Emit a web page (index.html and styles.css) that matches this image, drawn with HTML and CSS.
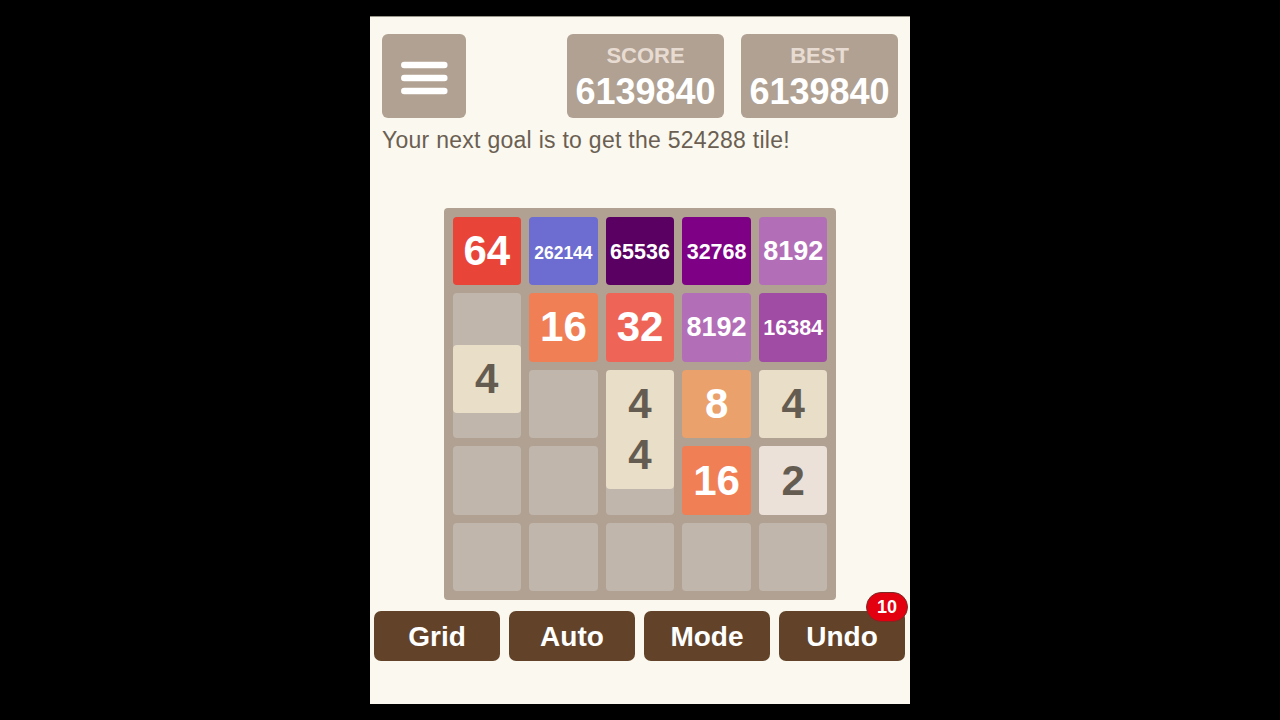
FILE: index.html
```html
<!DOCTYPE html>
<html lang="en">
<head>
<meta charset="utf-8">
<title>2048</title>
<link rel="stylesheet" href="styles.css">
</head>
<body>
<main class="phone">
  <header class="top">
    <button class="menu" aria-label="Menu">
      <svg width="84" height="84" viewBox="0 0 84 84"><path d="M22.3 31H62.3M22.3 44H62.3M22.3 57H62.3" stroke="#fff" stroke-width="6.5" stroke-linecap="round" fill="none"/></svg>
    </button>
    <div class="scores">
      <div class="score"><span class="label">SCORE</span><span class="value">6139840</span></div>
      <div class="score"><span class="label">BEST</span><span class="value">6139840</span></div>
    </div>
  </header>
  <p class="goal">Your next goal is to get the 524288 tile!</p>
  <section class="board">
    <div class="cell t64 big">64</div>
    <div class="cell t262144 xs">262144</div>
    <div class="cell t65536 sm">65536</div>
    <div class="cell t32768 sm">32768</div>
    <div class="cell t8192 md">8192</div>

    <div class="cell"><div class="cell t4 big moving m1">4</div></div>
    <div class="cell t16 big">16</div>
    <div class="cell t32 big">32</div>
    <div class="cell t8192 md">8192</div>
    <div class="cell t16384 sm">16384</div>

    <div class="cell"></div>
    <div class="cell"></div>
    <div class="cell t4 big">4</div>
    <div class="cell t8 big">8</div>
    <div class="cell t4 big">4</div>

    <div class="cell"></div>
    <div class="cell"></div>
    <div class="cell"><div class="cell t4 big moving m2">4</div></div>
    <div class="cell t16 big">16</div>
    <div class="cell t2 big">2</div>

    <div class="cell"></div>
    <div class="cell"></div>
    <div class="cell"></div>
    <div class="cell"></div>
    <div class="cell"></div>
  </section>
  <nav class="actions">
    <button class="action">Grid</button>
    <button class="action">Auto</button>
    <button class="action">Mode</button>
    <button class="action">Undo<span class="badge">10</span></button>
  </nav>
</main>
</body>
</html>
```
FILE: styles.css
```css
* { box-sizing: border-box; }
html, body { margin: 0; height: 100%; background: #000; }
body { font-family: "Liberation Sans", Arial, sans-serif; }

.phone {
  width: 540px;
  height: 688px;
  margin: 16px auto 0;
  background: #fbf8ef;
  border-top: 1px solid #98958b;
  display: flex;
  flex-direction: column;
  align-items: center;
}

.top {
  width: 100%;
  padding: 17px 12px 0;
  display: flex;
  justify-content: space-between;
}

.menu {
  width: 84px;
  height: 84px;
  border: 0;
  padding: 0;
  border-radius: 6px;
  background: #b0a192;
  display: flex;
  align-items: center;
  justify-content: center;
}

.scores { display: flex; gap: 17px; }

.score {
  width: 157px;
  height: 84px;
  border-radius: 6px;
  background: #b0a192;
  display: flex;
  flex-direction: column;
  align-items: center;
  padding-top: 9px;
  font-weight: bold;
}

.label { font-size: 22px; line-height: 25px; color: #e8dcd2; }
.value { font-size: 36px; line-height: 48px; color: #fff; }

.goal {
  width: 100%;
  margin: 8px 0 0;
  padding: 0 12px;
  font-size: 23px;
  line-height: 28px;
  letter-spacing: 0.27px;
  color: #6a5f52;
}

.board {
  width: 392px;
  height: 392px;
  margin-top: 54px;
  padding: 8.5px;
  border-radius: 4px;
  background: #b0a192;
  display: grid;
  grid-template-columns: repeat(5, 1fr);
  grid-template-rows: repeat(5, 1fr);
  gap: 8px;
}

.cell {
  position: relative;
  border-radius: 4px;
  background: #c1b6ab;
  display: flex;
  align-items: center;
  justify-content: center;
  font-weight: bold;
  color: #fff;
}

.moving { position: absolute; z-index: 1; left: 0; width: 100%; height: 100%; }
.m1 { top: 51.5px; }
.m2 { top: -26px; }

.big { font-size: 42px; }
.md { font-size: 27px; padding-top: 1px; }
.sm { font-size: 21.5px; padding-top: 3px; }
.xs { font-size: 17.5px; padding-top: 5px; }

.t2 { background: #ebe1d9; color: #655c51; }
.t4 { background: #e9dec7; color: #655c51; }
.t8 { background: #eaa16b; }
.t16 { background: #f07f56; }
.t32 { background: #ee6558; }
.t64 { background: #e84437; }
.t8192 { background: #b26fb7; }
.t16384 { background: #a04ca4; }
.t32768 { background: #7e0085; }
.t65536 { background: #590062; }
.t262144 { background: #6c6cd1; }

.actions {
  width: 100%;
  margin-top: 11px;
  padding: 0 4px;
  display: flex;
  gap: 9px;
}

.action {
  position: relative;
  width: 126px;
  height: 50px;
  border: 0;
  padding: 2px 0 0;
  border-radius: 7px;
  background: #62432a;
  color: #fff;
  font: bold 28px "Liberation Sans", Arial, sans-serif;
}

.badge {
  position: absolute;
  top: -19px;
  right: -3px;
  width: 42px;
  height: 30px;
  border-radius: 15px;
  border: 1px solid #7d2a25;
  background: #e3000f;
  font-size: 18px;
  font-weight: bold;
  line-height: 28px;
  text-align: center;
}
```
